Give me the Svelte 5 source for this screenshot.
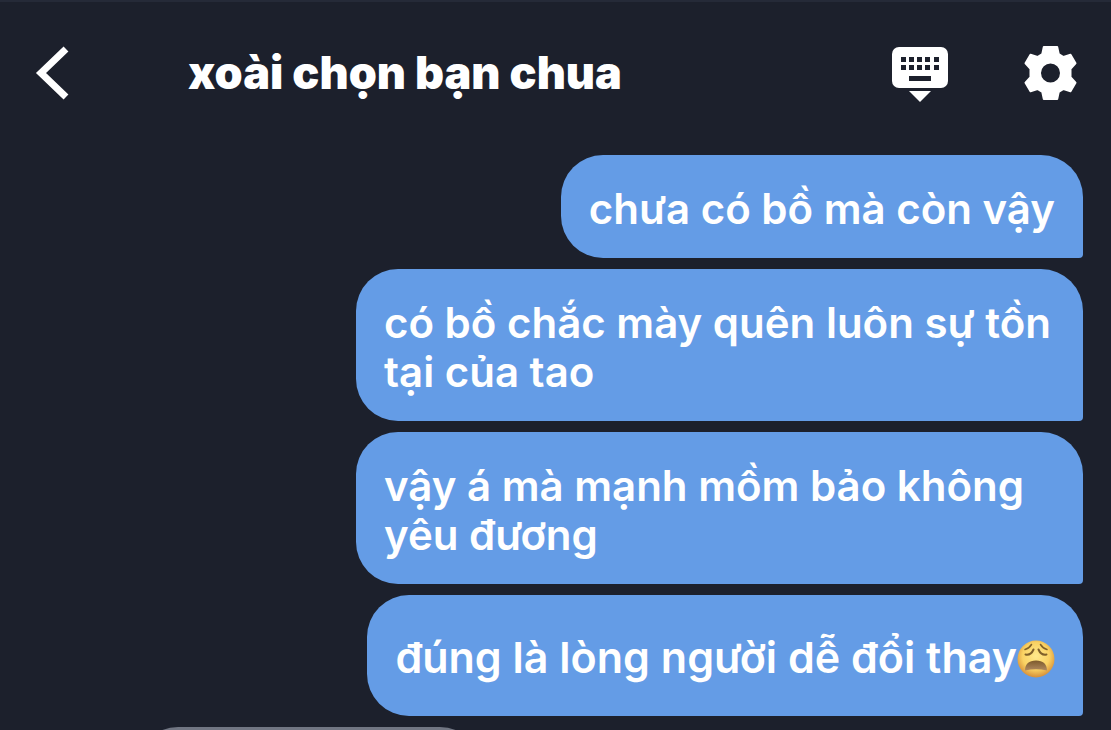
<script>
	let chatName = "xoài chọn bạn chua";
	let messages = [
		{ id: 1, text: "chưa có bồ mà còn vậy" },
		{ id: 2, text: "có bồ chắc mày quên luôn sự tồn tại của tao" },
		{ id: 3, text: "vậy á mà mạnh mồm bảo không yêu đương" },
		{ id: 4, text: "đúng là lòng người dễ đổi thay", weary: true }
	];
</script>

<main>
	<header>
		<button aria-label="Back">
			<svg width="34" height="56" viewBox="0 0 34 56">
				<path d="M30 4 L5 28 L30 52" fill="none" stroke="#fff" stroke-width="7" />
			</svg>
		</button>
		<h1>{chatName}</h1>
		<button aria-label="Keyboard">
			<svg width="56" height="56" viewBox="0 0 56 56">
				<rect x="0" y="2" width="56" height="41" rx="7" fill="#fff" />
				{#each [9, 17, 25, 33, 42] as x}
					<rect {x} y="12" width="5" height="5" fill="#1c202c" />
					<rect {x} y="20" width="5" height="5" fill="#1c202c" />
				{/each}
				<rect x="17" y="31" width="22" height="5" fill="#1c202c" />
				<path d="M17 46 H39 L28 57 Z" fill="#fff" />
			</svg>
		</button>
		<button aria-label="Settings">
			<svg width="54" height="54" viewBox="0 0 54 54">
				<path
					fill="#fff"
					stroke="#fff"
					stroke-width="2"
					stroke-linejoin="round"
					fill-rule="evenodd"
					d="M19.800 1 H33.200 L34.700 8 L39.500 11 L46.500 8.700 L51.500 17.300 L46.500 22.800 V31.200 L51.500 36.700 L46.500 45.300 L39.500 43 L34.700 46 L33.200 53 H19.800 L18.300 46 L13.500 43 L6.500 45.300 L1.500 36.700 L6.500 31.200 V22.800 L1.500 17.300 L6.500 8.700 L13.500 11 L18.300 8 Z M26.500 16.500 A10.500 10.500 0 1 0 26.500 37.500 A10.500 10.500 0 1 0 26.500 16.500 Z"
				/>
			</svg>
		</button>
	</header>

	<div class="messages">
		{#each messages as message (message.id)}
			<p class="bubble" class:tall={message.weary}>
				{message.text}{#if message.weary}<svg class="emoji" width="38" height="38" viewBox="0 0 38 38" role="img" aria-label="weary face">
					<defs>
						<radialGradient id="face" cx="50%" cy="42%" r="56%">
							<stop offset="0" stop-color="#ffe98c" />
							<stop offset="0.65" stop-color="#fad263" />
							<stop offset="1" stop-color="#d9943c" />
						</radialGradient>
						<linearGradient id="mouth" x1="0" y1="0" x2="0" y2="1">
							<stop offset="0" stop-color="#7d5a2c" />
							<stop offset="1" stop-color="#b08a60" />
						</linearGradient>
					</defs>
					<circle cx="19" cy="19" r="18.500" fill="url(#face)" />
					<path d="M8 30.500 C8 24 12 20.500 19 20.500 C26 20.500 30 24 30 30.500 Q19 28 8 30.500 Z" fill="url(#mouth)" />
					<g fill="none" stroke="#80602a" stroke-linecap="round">
						<path d="M8 9.500 Q12 8.500 14.500 4.500 M23.500 4.500 Q26 8.500 30 9.500" stroke-width="1.500" />
						<path d="M8.500 14.500 Q14 15.500 16.500 9.500 M21.500 9.500 Q24 15.500 29.500 14.500" stroke-width="2" />
					</g>
				</svg>{/if}
			</p>
		{/each}
		<div class="bubble incoming"></div>
	</div>
</main>

<style>
	:global(body) {
		background-color: #1c202c;
	}
	main {
		height: 100vh;
		overflow: hidden;
		box-sizing: border-box;
		border-top: 2px solid #252a38;
		font-family: Inter, "Noto Sans", sans-serif;
		color: #fff;
	}
	header {
		display: flex;
		align-items: center;
		height: 142px;
		padding: 0 33px 0 36px;
		gap: 76px;
	}
	h1 {
		flex: 1;
		margin: 0 0 0 42px;
		font-size: 45px;
		line-height: 48px;
		font-weight: 900;
		white-space: nowrap;
	}
	button {
		display: flex;
		padding: 0;
		border: 0;
		background: none;
		cursor: pointer;
	}
	svg {
		display: block;
		overflow: visible;
	}
	.messages {
		display: flex;
		flex-direction: column;
		align-items: flex-end;
		gap: 11px;
		padding: 11px 28px 0 136px;
	}
	.bubble {
		box-sizing: border-box;
		max-width: 727px;
		margin: 0;
		padding: 29px 28px 25px;
		border-radius: 42px 42px 4px 42px;
		background-color: #649ce6;
		font-size: 42px;
		line-height: 49px;
		font-weight: 600;
	}
	.tall {
		font-size: 43px;
		line-height: 67px;
	}
	.emoji {
		display: inline-block;
		vertical-align: -5px;
	}
	.incoming {
		align-self: flex-start;
		width: 346px;
		height: 103px;
		border-radius: 42px 42px 42px 4px;
		background-color: #717683;
	}
</style>
